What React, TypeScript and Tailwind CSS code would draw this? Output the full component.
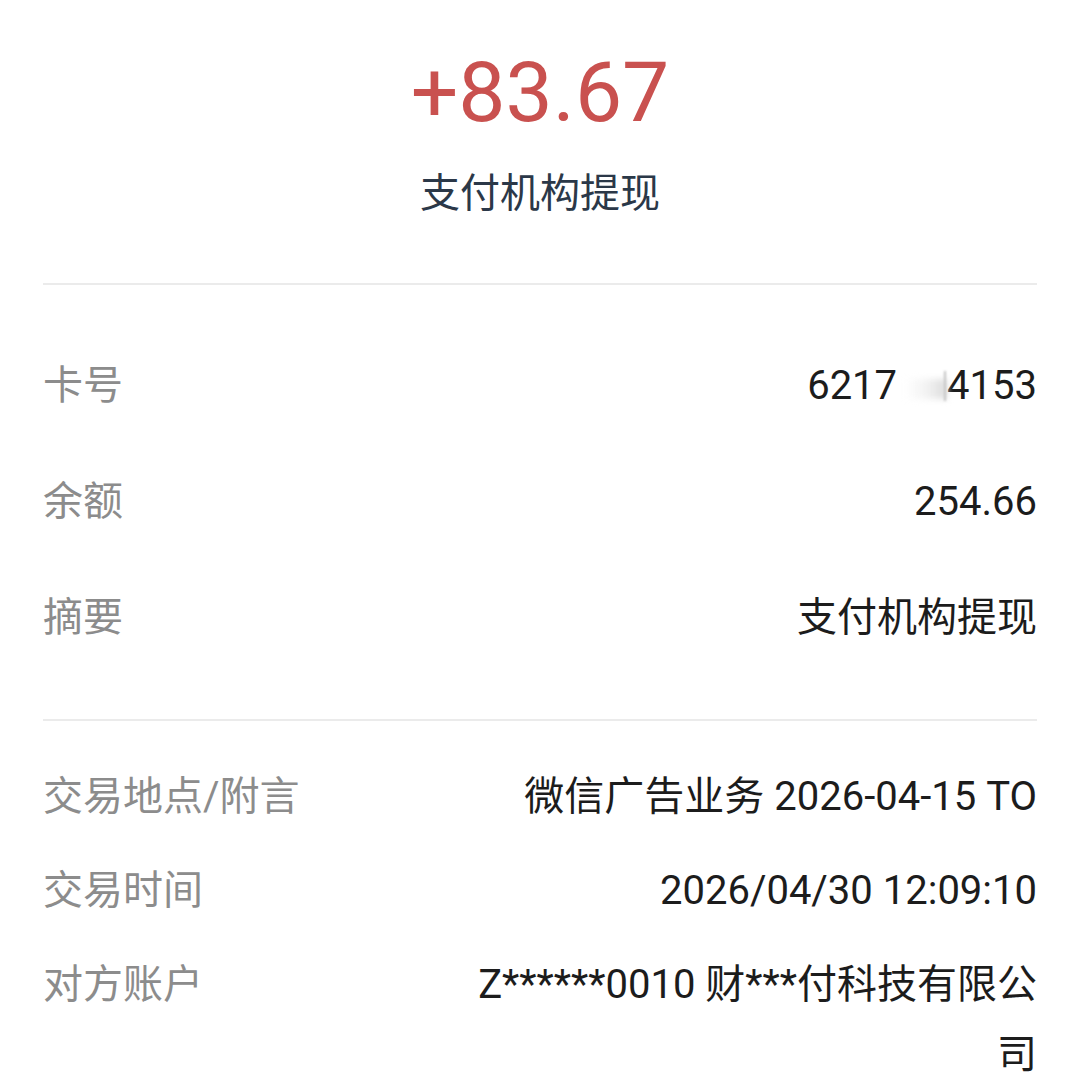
export default function App() {
  const font = { fontFamily: 'Roboto, "Noto Sans CJK SC", sans-serif' };

  return (
    <div className="min-h-screen w-[1080px] bg-white" style={font}>
      <div className="px-[43px]">
        {/* header */}
        <div className="flex flex-col items-center pt-[51px] pb-[62px]">
          <div className="text-[84px] leading-none text-[#c9514f]">+83.67</div>
          <div className="mt-[32px] h-[54px] flex items-center text-[40px] leading-none text-[#2b3848]">
            支付机构提现
          </div>
        </div>

        <div className="h-[2px] bg-[#ebebeb]" />

        {/* account info */}
        <div className="pt-[43px] pb-[43px] text-[40px]">
          <div className="h-[116px] flex items-center justify-between">
            <span className="text-[#8c8c8c]">卡号</span>
            <span className="flex items-center text-[#1c1c1c]">
              6217
              <span className="relative inline-block w-[50px] h-[34px]">
                <span className="absolute left-[8px] right-0 top-[10px] h-[20px] bg-gradient-to-r from-transparent via-[#f3f3f3] to-[#dcdcdc] blur-[3px]" />
                <span className="absolute right-[1px] top-[2px] h-[30px] w-[2px] bg-[#c4c4c4] blur-[1px]" />
              </span>
              4153
            </span>
          </div>
          <div className="h-[116px] flex items-center justify-between">
            <span className="text-[#8c8c8c]">余额</span>
            <span className="text-[#1c1c1c]">254.66</span>
          </div>
          <div className="h-[116px] flex items-center justify-between">
            <span className="text-[#8c8c8c]">摘要</span>
            <span className="text-[#1c1c1c]">支付机构提现</span>
          </div>
        </div>

        <div className="h-[2px] bg-[#ebebeb]" />

        {/* transaction info */}
        <div className="pt-[41px] flex flex-col gap-[24px] text-[40px] leading-[70px]">
          <div className="flex items-start justify-between">
            <span className="text-[#8c8c8c]">交易地点/附言</span>
            <span className="text-[#1c1c1c]">微信广告业务 2026-04-15 TO</span>
          </div>
          <div className="flex items-start justify-between">
            <span className="text-[#8c8c8c]">交易时间</span>
            <span className="text-[#1c1c1c]">2026/04/30 12:09:10</span>
          </div>
          <div className="flex items-start justify-between">
            <span className="text-[#8c8c8c]">对方账户</span>
            <span className="max-w-[575px] text-right text-[#1c1c1c]">
              Z******0010 财***付科技有限公司
            </span>
          </div>
        </div>
      </div>
    </div>
  );
}
